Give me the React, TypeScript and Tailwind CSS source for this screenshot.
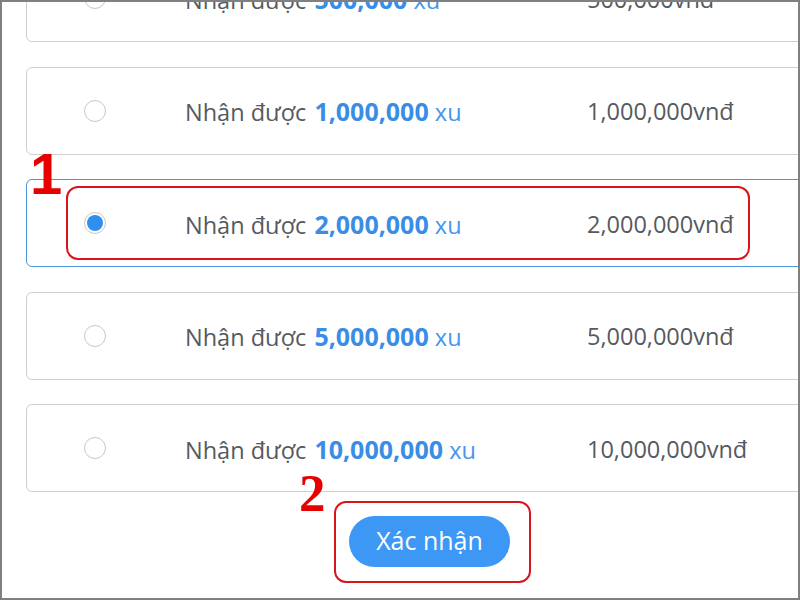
const packages = [
  { coins: "500,000", price: "500,000vnđ" },
  { coins: "1,000,000", price: "1,000,000vnđ" },
  { coins: "2,000,000", price: "2,000,000vnđ", selected: true },
  { coins: "5,000,000", price: "5,000,000vnđ" },
  { coins: "10,000,000", price: "10,000,000vnđ" },
];

function PackageRow({
  coins,
  price,
  selected,
}: {
  coins: string;
  price: string;
  selected?: boolean;
}) {
  return (
    <div
      className={
        selected
          ? "flex h-[88px] w-[800px] shrink-0 items-center rounded-[6px] border border-[#4a94dc] pl-[57px]"
          : "flex h-[88px] w-[800px] shrink-0 items-center rounded-[6px] border border-[#cfcfcf] pl-[57px]"
      }
    >
      {selected ? (
        <span className="flex h-[22px] w-[22px] items-center justify-center rounded-full border border-[#c8c8c8] bg-white">
          <span className="h-[16px] w-[16px] rounded-full bg-[#2f8ff0]" />
        </span>
      ) : (
        <span className="h-[22px] w-[22px] rounded-full border border-[#c8c8c8] bg-white" />
      )}
      <div className="ml-[79px] w-[402px] pt-[3px] text-[23.5px] text-[#555a60]">
        Nhận được{" "}
        <span className="ml-[2px] text-[25px] font-bold text-[#3a8de6]">{coins}</span>{" "}
        <span className="text-[#4596ea]">xu</span>
      </div>
      <div className="pt-[3px] text-[23.5px] text-[#555a60]">{price}</div>
    </div>
  );
}

export default function App() {
  return (
    <div
      className="relative h-[600px] w-[800px] overflow-hidden border-2 border-[#808080] bg-white"
      style={{ fontFamily: '"Open Sans", "Noto Sans", sans-serif' }}
    >
      <div className="mt-[-48px] flex flex-col gap-[24.5px] pl-[24px]">
        {packages.map((p) => (
          <PackageRow key={p.coins} {...p} />
        ))}
        <button className="ml-[323px] mt-[-1px] flex h-[51px] w-[161px] items-center justify-center rounded-full bg-[#3d97f5] text-[25px] text-white">
          Xác nhận
        </button>
      </div>

      {/* annotations */}
      <div className="absolute left-[64px] top-[184px] h-[74px] w-[684px] rounded-[12px] border-2 border-[#d9141b]" />
      <div
        className="absolute left-[28px] top-[143px] text-[58px] leading-none font-bold text-[#e60000]"
        style={{ fontFamily: '"Liberation Sans", Arial, sans-serif' }}
      >
        1
      </div>
      <div className="absolute left-[332px] top-[499px] h-[82px] w-[197px] rounded-[12px] border-2 border-[#d9141b]" />
      <div
        className="absolute left-[297px] top-[465px] text-[53px] leading-none font-bold text-[#e60000]"
        style={{ fontFamily: '"Liberation Serif", "Times New Roman", serif' }}
      >
        2
      </div>
    </div>
  );
}
